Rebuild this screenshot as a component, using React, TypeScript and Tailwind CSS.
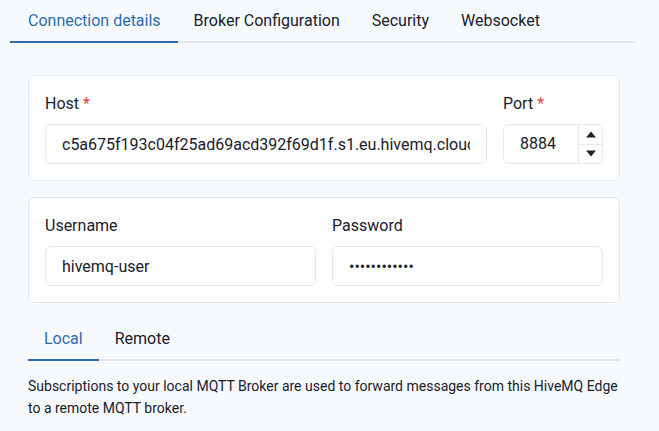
import React from "react";

const tabs = ["Connection details", "Broker Configuration", "Security", "Websocket"];

function Label({ text, required }: { text: string; required?: boolean }) {
  return (
    <label className="mb-2 block h-6 text-[16px] leading-6 text-[#1a202c]">
      {text}
      {required && <span className="ml-1 text-[#e53e3e]">*</span>}
    </label>
  );
}

function TextInput({ value, type = "text" }: { value: string; type?: string }) {
  return (
    <input
      type={type}
      readOnly
      value={value}
      className="h-10 w-full rounded-md border border-[#e2e8f0] bg-white px-4 text-[16px] text-[#1a202c] outline-none"
    />
  );
}

export default function App() {
  return (
    <div
      className="h-[431px] w-[659px] overflow-hidden bg-[#f7fafc] text-[#1a202c]"
      style={{ fontFamily: "Roboto, 'Liberation Sans', sans-serif" }}
    >
      {/* Top tabs */}
      <div className="ml-[10px] flex w-[626px] border-b-2 border-[#e2e8f0]">
        {tabs.map((t, i) => (
          <div
            key={t}
            className={
              "-mb-[2px] border-b-2 pt-[9px] pb-2 text-[16px] leading-6 " +
              (i === 0
                ? "pl-[18px] pr-[17px] border-[#2b6cb0] text-[#2b6cb0]"
                : "px-4 border-transparent text-[#1a202c]")
            }
          >
            {t}
          </div>
        ))}
      </div>

      <div className="ml-[28px] mt-8 flex w-[592px] flex-col gap-4">
        {/* Host / Port */}
        <div className="flex gap-4 rounded-md border border-[#e2e8f0] bg-white p-4">
          <div className="flex-1">
            <Label text="Host" required />
            <TextInput value="c5a675f193c04f25ad69acd392f69d1f.s1.eu.hivemq.cloud" />
          </div>
          <div className="w-[100px]">
            <Label text="Port" required />
            <div className="flex h-10 w-full rounded-md border border-[#e2e8f0] bg-white">
              <div className="flex flex-1 items-center pl-4 text-[16px]">8884</div>
              <div className="flex w-6 flex-col border-l border-[#e2e8f0]">
                <div className="flex flex-1 items-center justify-center">
                  <svg width="10" height="7" viewBox="0 0 10 7">
                    <path d="M0 6.5 L5 0.5 L10 6.5 Z" fill="#1a202c" />
                  </svg>
                </div>
                <div className="flex flex-1 items-center justify-center border-t border-[#e2e8f0]">
                  <svg width="10" height="7" viewBox="0 0 10 7">
                    <path d="M0 0.5 L5 6.5 L10 0.5 Z" fill="#1a202c" />
                  </svg>
                </div>
              </div>
            </div>
          </div>
        </div>

        {/* Username / Password */}
        <div className="grid grid-cols-2 gap-4 rounded-md border border-[#e2e8f0] bg-white p-4">
          <div>
            <Label text="Username" />
            <TextInput value="hivemq-user" />
          </div>
          <div>
            <Label text="Password" />
            <TextInput type="password" value="hivemqpasswd" />
          </div>
        </div>

        {/* Local / Remote tabs */}
        <div>
          <div className="flex border-b-2 border-[#e2e8f0]">
            <div className="-mb-[2px] border-b-2 border-[#2b6cb0] px-4 py-2 text-[16px] leading-6 text-[#2b6cb0]">
              Local
            </div>
            <div className="-mb-[2px] border-b-2 border-transparent px-4 py-2 text-[16px] leading-6">
              Remote
            </div>
          </div>
          <p className="mt-[14px] text-[14px] leading-[22px] text-[#1a202c]">
            Subscriptions to your local MQTT Broker are used to forward messages from this HiveMQ Edge
            to a remote MQTT broker.
          </p>
        </div>
      </div>
    </div>
  );
}
